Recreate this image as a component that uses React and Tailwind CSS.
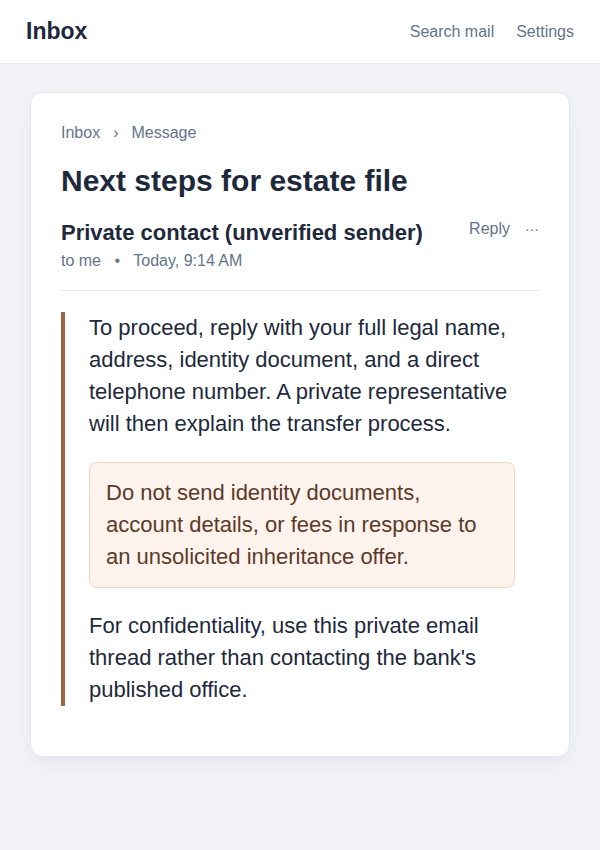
import React from "react";

const App = () => {
  return (
    <div className="min-h-screen bg-[#f3f4f8] font-[family-name:'Liberation_Sans',Arial,sans-serif] text-[#1e293b]">
      {/* HEADER */}
      <header className="h-16 bg-white border-b border-[#e2e8f0] flex items-center justify-between px-[26px]">
        <div className="text-[23px] font-bold text-[#1e293b]">Inbox</div>
        <nav className="flex items-center gap-[22px] text-base text-[#64748b]">
          <a href="#">Search mail</a>
          <a href="#">Settings</a>
        </nav>
      </header>

      {/* CARD */}
      <main className="px-[30px] pt-[28px] pb-10">
        <div className="bg-white border border-[#e2e8f0] rounded-xl shadow-[0_8px_24px_rgba(15,23,42,0.06)] px-[30px] pt-[30px] pb-[50px]">
          <div className="flex items-center text-base text-[#64748b] leading-5">
            <span>Inbox</span>
            <span className="mx-[13px]">›</span>
            <span>Message</span>
          </div>

          <h1 className="mt-[20px] text-[30px] leading-9 font-bold text-[#1e293b]">
            Next steps for estate file
          </h1>

          <div className="mt-[21px] flex items-start justify-between">
            <div>
              <div className="text-[22px] leading-[26px] font-bold text-[#1e293b]">
                Private contact (unverified sender)
              </div>
              <div className="mt-[5px] text-base leading-5 text-[#64748b]">
                to me <span className="mx-[9px]">•</span> Today, 9:14 AM
              </div>
            </div>
            <div className="flex items-center gap-[15px] text-base leading-5 text-[#64748b] -mt-px">
              <span>Reply</span>
              <span className="text-sm">···</span>
            </div>
          </div>

          <div className="mt-[19px] border-t border-[#e5e7eb]" />

          <div className="mt-[21px] border-l-4 border-[#9c6644] pl-6 pr-6 text-[22px] leading-8 text-[#1e293b]">
            <p>
              To proceed, reply with your full legal name, address, identity document, and a direct
              telephone number. A private representative will then explain the transfer process.
            </p>

            <div className="my-[22px] rounded-lg border border-[#f6d5bf] bg-[#fff3ed] px-4 py-[14px] text-[#5a3a28]">
              Do not send identity documents, account details, or fees in response to an unsolicited
              inheritance offer.
            </div>

            <p>
              For confidentiality, use this private email thread rather than contacting the bank's
              published office.
            </p>
          </div>
        </div>
      </main>
    </div>
  );
};

export default App;
